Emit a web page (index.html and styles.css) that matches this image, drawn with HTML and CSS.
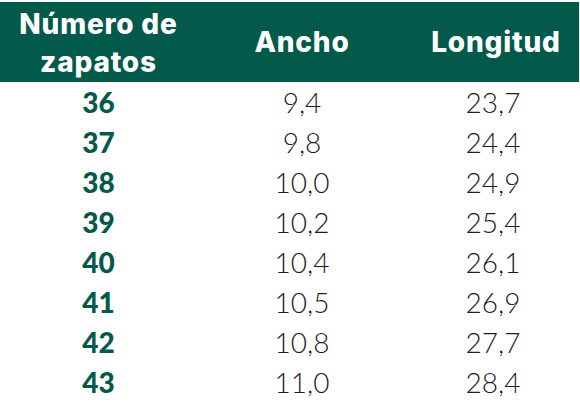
FILE: index.html
```html
<!DOCTYPE html>
<html lang="es">
<head>
<meta charset="utf-8">
<link rel="stylesheet" href="styles.css">
</head>
<body>
<div class="table">
  <div class="head">
    <div class="hcell">Número de<br>zapatos</div>
    <div class="hcell">Ancho</div>
    <div class="hcell">Longitud</div>
  </div>
  <div class="row"><div class="size">36</div><div class="val">9,4</div><div class="val">23,7</div></div>
  <div class="row"><div class="size">37</div><div class="val">9,8</div><div class="val">24,4</div></div>
  <div class="row"><div class="size">38</div><div class="val">10,0</div><div class="val">24,9</div></div>
  <div class="row"><div class="size">39</div><div class="val">10,2</div><div class="val">25,4</div></div>
  <div class="row"><div class="size">40</div><div class="val">10,4</div><div class="val">26,1</div></div>
  <div class="row"><div class="size">41</div><div class="val">10,5</div><div class="val">26,9</div></div>
  <div class="row"><div class="size">42</div><div class="val">10,8</div><div class="val">27,7</div></div>
  <div class="row"><div class="size">43</div><div class="val">11,0</div><div class="val">28,4</div></div>
</div>
</body>
</html>
```
FILE: styles.css
```css
html, body {
  margin: 0;
  padding: 0;
  background: #ffffff;
}
body {
  padding-top: 2px;
  font-family: Lato, "Liberation Sans", sans-serif;
}
.table {
  width: 579px;
}
.head, .row {
  display: grid;
  grid-template-columns: 197px 210px 172px;
  align-items: center;
  text-align: center;
}
.head {
  background: #03594a;
  height: 80px;
  color: #ffffff;
  font-family: Inter, Lato, sans-serif;
  font-weight: 800;
  font-size: 28px;
  line-height: 38px;
  letter-spacing: 0.8px;
}
.hcell:first-child {
  padding-top: 1px;
}
.hcell:nth-child(3) {
  padding-left: 6px;
}
.row {
  height: 40px;
  font-size: 28px;
  line-height: 40px;
}
.size {
  color: #03594a;
  font-weight: 900;
}
.val {
  color: #1c1c1c;
  font-weight: 300;
}
```
